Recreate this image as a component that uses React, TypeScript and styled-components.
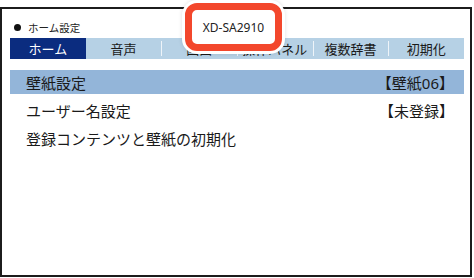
import React from 'react';
import styled, { createGlobalStyle } from 'styled-components';

const GlobalStyle = createGlobalStyle`
  html, body {
    margin: 0;
    padding: 0;
    background: #ffffff;
  }
  body {
    font-family: "Noto Sans", "Noto Sans CJK JP", sans-serif;
    color: #1a1a1a;
  }
`;

const Screen = styled.div`
  position: relative;
  box-sizing: border-box;
  margin-top: 7px;
  width: 472px;
  height: 270px;
  border: 2px solid #1c1c1c;
  padding: 0 6px 0 8px;
  background: #fff;
`;

const Header = styled.div`
  box-sizing: border-box;
  height: 29px;
  padding: 8px 0 0 4px;
  display: flex;
  align-items: center;
  gap: 7px;
  font-size: 10.5px;
  color: #222;
`;

const Bullet = styled.span`
  width: 7px;
  height: 7px;
  border-radius: 50%;
  background: #111;
`;

const TabBar = styled.div`
  display: grid;
  grid-template-columns: repeat(6, 1fr);
  height: 21px;
  background: #b6d1e5;
`;

const Tab = styled.div<{ $active?: boolean; $sep?: boolean }>`
  position: relative;
  display: flex;
  align-items: center;
  justify-content: center;
  font-size: 13px;
  color: ${p => (p.$active ? '#ffffff' : '#1a1a1a')};
  background: ${p => (p.$active ? '#0b2c7f' : 'transparent')};
  white-space: nowrap;

  &::before {
    content: '';
    display: ${p => (p.$sep ? 'block' : 'none')};
    position: absolute;
    left: 0;
    top: 3px;
    bottom: 3px;
    width: 1px;
    background: #eef4f9;
  }
`;

const List = styled.div`
  margin-top: 11px;
  display: flex;
  flex-direction: column;
  gap: 4px;
`;

const Row = styled.div<{ $selected?: boolean }>`
  height: 24px;
  display: flex;
  align-items: center;
  justify-content: space-between;
  padding: 0 10px 0 16px;
  font-size: 15px;
  color: #1a1a1a;
  background: ${p => (p.$selected ? '#93b5d9' : 'transparent')};
`;

const Callout = styled.div`
  position: absolute;
  left: 183px;
  top: -6px;
  box-sizing: border-box;
  width: 97px;
  height: 48px;
  border: 7px solid #f3472c;
  border-radius: 12px;
  background: #fff;
  box-shadow: 0 0 0 3px #ffffff, 0 0 4px 3px rgba(0, 0, 0, 0.12);
  display: flex;
  align-items: center;
  justify-content: center;
  font-size: 12px;
  color: #222;
`;

const tabs = ['ホーム', '音声', '画面', '操作パネル', '複数辞書', '初期化'];

const rows = [
  { label: '壁紙設定', value: '【壁紙06】' },
  { label: 'ユーザー名設定', value: '【未登録】' },
  { label: '登録コンテンツと壁紙の初期化', value: '' },
];

export default function App() {
  return (
    <>
      <GlobalStyle />
      <Screen>
        <Header>
          <Bullet />
          ホーム設定
        </Header>
        <TabBar>
          {tabs.map((t, i) => (
            <Tab key={t} $active={i === 0} $sep={i > 1}>
              {t}
            </Tab>
          ))}
        </TabBar>
        <List>
          {rows.map((r, i) => (
            <Row key={r.label} $selected={i === 0}>
              <span>{r.label}</span>
              <span>{r.value}</span>
            </Row>
          ))}
        </List>
        <Callout>XD-SA2910</Callout>
      </Screen>
    </>
  );
}
